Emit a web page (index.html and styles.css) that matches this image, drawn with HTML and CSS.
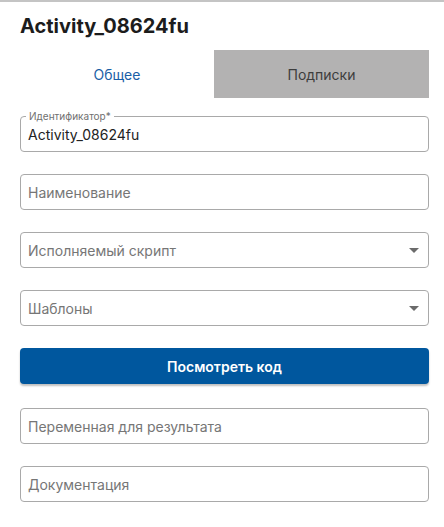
FILE: index.html
```html
<!DOCTYPE html>
<html lang="ru">
<head>
<meta charset="utf-8">
<link rel="stylesheet" href="styles.css">
</head>
<body>
<div class="panel">
  <h1 class="title">Activity_08624fu</h1>
  <div class="tabs">
    <div class="tab tab-active">Общее</div>
    <div class="tab tab-inactive">Подписки</div>
  </div>
  <div class="form">
    <div class="field filled">
      <span class="field-label">Идентификатор*</span>
      <span class="field-value">Activity_08624fu</span>
    </div>
    <div class="field">
      <span class="field-placeholder">Наименование</span>
    </div>
    <div class="field select">
      <span class="field-placeholder">Исполняемый скрипт</span>
      <span class="arrow"></span>
    </div>
    <div class="field select">
      <span class="field-placeholder">Шаблоны</span>
      <span class="arrow"></span>
    </div>
    <button class="btn">Посмотреть код</button>
    <div class="field">
      <span class="field-placeholder">Переменная для результата</span>
    </div>
    <div class="field">
      <span class="field-placeholder">Документация</span>
    </div>
  </div>
</div>
</body>
</html>
```
FILE: styles.css
```css
html, body {
  margin: 0;
  padding: 0;
  background: #fff;
}
body {
  font-family: Inter, "Noto Sans", sans-serif;
  color: #222;
  border-top: 2px solid #c4c4c4;
  height: 525px;
  overflow: hidden;
}
.panel {
  padding: 0 15px 0 20px;
}
.title {
  margin: 0;
  padding-top: 12px;
  font-size: 20px;
  font-weight: 700;
  line-height: 24px;
  color: #1c1c1c;
}
.tabs {
  display: flex;
  margin-top: 12px;
  height: 48px;
}
.tab {
  display: flex;
  align-items: center;
  justify-content: center;
  font-size: 14px;
}
.tab-active {
  width: 194px;
  color: #1a5ea6;
}
.tab-inactive {
  flex: 1;
  background: #b3b2b2;
  color: #3d3d3d;
}
.form {
  display: flex;
  flex-direction: column;
  gap: 22px;
  padding-top: 18px;
}
.field {
  position: relative;
  height: 36px;
  box-sizing: border-box;
  border: 1px solid #a9a9a9;
  border-radius: 4px;
  display: flex;
  align-items: center;
  padding: 0 7px;
  font-size: 14px;
}
.field-placeholder {
  color: #767676;
}
.field-value {
  color: #222;
  padding-top: 1px;
}
.field-label {
  position: absolute;
  left: 5px;
  top: -7px;
  font-size: 10px;
  line-height: 12px;
  color: #707070;
  background: #fff;
  padding: 0 3px;
}
.arrow {
  position: absolute;
  right: 9px;
  top: 15px;
  width: 0;
  height: 0;
  border-left: 5px solid transparent;
  border-right: 5px solid transparent;
  border-top: 5px solid #6b6b6b;
}
.btn {
  height: 36px;
  margin-bottom: 2px;
  border: none;
  border-radius: 4px;
  background: #00579e;
  color: #fff;
  font-family: Inter, "Noto Sans", sans-serif;
  font-size: 14px;
  font-weight: 600;
  box-shadow: 0 2px 2px rgba(0,0,0,0.25);
}
```
